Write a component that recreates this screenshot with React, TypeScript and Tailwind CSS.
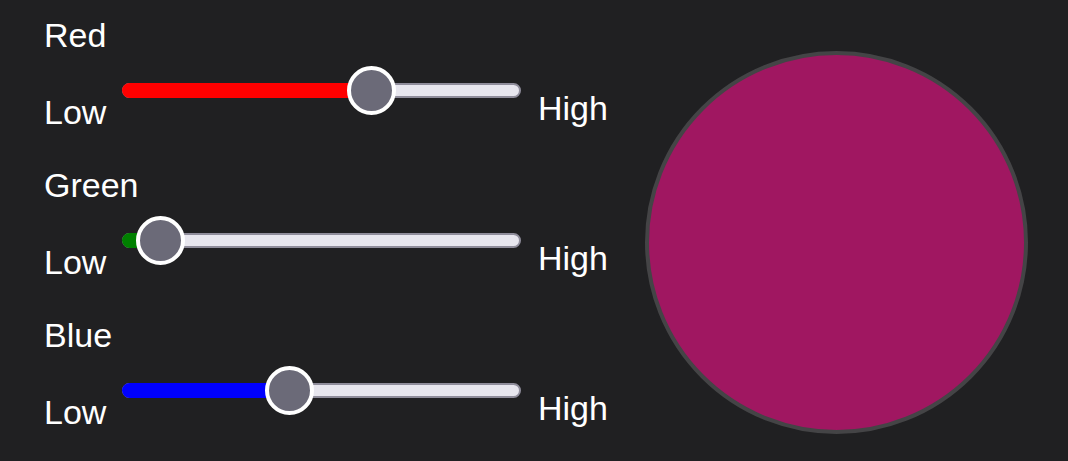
const channels = [
  { name: "Red", fill: "bg-[#ff0000]", pos: 249 },
  { name: "Green", fill: "bg-[#008000]", pos: 38 },
  { name: "Blue", fill: "bg-[#0000ff]", pos: 167 },
];

const Slider = ({ fill, pos }: { fill: string; pos: number }) => (
  <div className="relative flex h-[49px] w-[399px] shrink-0 items-center">
    <div className="relative h-[15px] w-full rounded-full border-2 border-[#8f8d9b] bg-[#e7e6ee]">
      <div
        className={`absolute -left-[2px] -top-[2px] -bottom-[2px] rounded-l-full ${fill}`}
        style={{ width: pos + 2 }}
      />
    </div>
    <div
      className="absolute top-0 h-[49px] w-[49px] rounded-full border-4 border-white bg-[#6b6a78]"
      style={{ left: pos - 24 }}
    />
  </div>
);

export default function App() {
  return (
    <div
      className="flex h-[461px] w-full bg-[#202022] text-white"
      style={{ fontFamily: '"Liberation Sans", Arial, sans-serif' }}
    >
      <div className="flex w-[645px] shrink-0 flex-col pl-[44px] pt-[16px]">
        {channels.map((c) => (
          <div key={c.name} className="h-[150px] shrink-0">
            <div className="text-[34px] leading-[39px]">{c.name}</div>
            <div className="mt-[11px] flex items-start">
              <div className="mt-[27px] w-[78px] shrink-0 text-[34px] leading-[39px]">Low</div>
              <Slider fill={c.fill} pos={c.pos} />
              <div className="ml-[17px] mt-[23px] text-[34px] leading-[39px]">High</div>
            </div>
          </div>
        ))}
      </div>
      <div className="mt-[51px] h-[383px] w-[383px] shrink-0 rounded-full border-4 border-[#444446] bg-[#a01761]" />
    </div>
  );
}
